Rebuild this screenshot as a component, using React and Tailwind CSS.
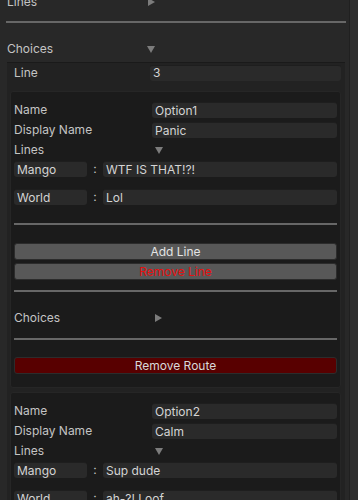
import React from 'react';

const font = { fontFamily: 'Inter, "Noto Sans", sans-serif' };

const TriDown = () => (
  <svg width="8" height="7" viewBox="0 0 8 7" className="shrink-0">
    <path d="M0 0 L8 0 L4 7 Z" fill="#7c7c7c" />
  </svg>
);

const TriRight = () => (
  <svg width="7" height="8" viewBox="0 0 7 8" className="shrink-0">
    <path d="M0 0 L7 4 L0 8 Z" fill="#7c7c7c" />
  </svg>
);

const Sep = ({ className = '' }) => <div className={`h-[2px] bg-[#676767] ${className}`} />;

const Field = ({ children, className = '' }) => (
  <div className={`h-[16px] bg-[#2a2a2a] rounded-[3px] border-t border-[#1e1e1e] flex items-center pl-[3px] text-[#d4d4d4] leading-none ${className}`}>
    {children}
  </div>
);

const PropRow = ({ label, value, className = '' }) => (
  <div className={`h-[18px] flex items-center ${className}`}>
    <div className="w-[138px] text-[#c4c4c4]">{label}</div>
    <Field className="flex-1">{value}</Field>
  </div>
);

const LineRow = ({ who, text, className = '' }) => (
  <div className={`h-[18px] flex items-center ${className}`}>
    <Field className="w-[73px]">{who}</Field>
    <div className="w-[16px] text-center text-[#c4c4c4]">:</div>
    <Field className="flex-1">{text}</Field>
  </div>
);

const Button = ({ children, className = '' }) => (
  <div className={`h-[17px] rounded-[3px] border border-[#2c2c2c] flex items-center justify-center leading-none ${className}`}>
    {children}
  </div>
);

const ChoiceItem = ({ name, display, lines, first = false }) => (
  <div className={`${first ? '' : 'mt-[4px]'} bg-[#1b1b1b] border border-[#262626] rounded-[3px] pt-[9px] pb-[13px] pl-[3px] pr-[3px]`}>
    <PropRow label="Name" value={name} />
    <PropRow label="Display Name" value={display} className="mt-[2px]" />
    <div className="h-[18px] mt-[2px] flex items-center">
      <div className="w-[141px] text-[#c4c4c4]">Lines</div>
      <TriDown />
    </div>
    <LineRow who={lines[0][0]} text={lines[0][1]} className="mt-[1px]" />
    <LineRow who={lines[1][0]} text={lines[1][1]} className="mt-[10px]" />
    <Sep className="mt-[17px]" />
    <Button className="mt-[18px] bg-[#585858] text-[#e4e4e4]">Add Line</Button>
    <Button className="mt-[3px] bg-[#585858] text-[#e81010]">Remove Line</Button>
    <Sep className="mt-[10px]" />
    <div className="h-[20px] mt-[16px] flex items-center">
      <div className="w-[141px] text-[#c4c4c4]">Choices</div>
      <TriRight />
    </div>
    <Sep className="mt-[10px]" />
    <Button className="mt-[17px] bg-[#580000] text-[#d8d8d8]">Remove Route</Button>
  </div>
);

export default function App() {
  return (
    <div className="w-[358px] h-[500px] overflow-hidden bg-[#282828] flex text-[12px]" style={font}>
      <div className="w-[346px] pl-[6px]">
        <div className="h-[20px] -mt-[8px] flex items-center pl-[1px]">
          <div className="w-[141px] text-[#c4c4c4]">Lines</div>
          <TriRight />
        </div>
        <Sep className="mt-[9px]" />
        <div className="h-[20px] mt-[16px] flex items-center pl-[1px]">
          <div className="w-[140px] text-[#c4c4c4]">Choices</div>
          <TriDown />
        </div>
        <div className="mt-[3px] ml-[1px] mr-[1px] bg-[#222222] border-t border-[#1a1a1a] pl-[3px] pr-[4px] pb-[4px] min-h-[500px]">
          <div className="h-[19px] flex items-center">
            <div className="w-[140px] text-[#c4c4c4] pl-[4px]">Line</div>
            <Field className="flex-1">3</Field>
          </div>
          <div className="mt-[9px]">
            <ChoiceItem
              first
              name="Option1"
              display="Panic"
              lines={[['Mango', 'WTF IS THAT!?!'], ['World', 'Lol']]}
            />
            <ChoiceItem
              name="Option2"
              display="Calm"
              lines={[['Mango', 'Sup dude'], ['World', 'ah-?! Loof']]}
            />
          </div>
        </div>
      </div>
      <div className="flex-1 flex">
        <div className="w-[3px]" />
        <div className="w-[1px] bg-[#202020]" />
        <div className="flex-1 bg-[#2e2e2e]" />
      </div>
    </div>
  );
}
